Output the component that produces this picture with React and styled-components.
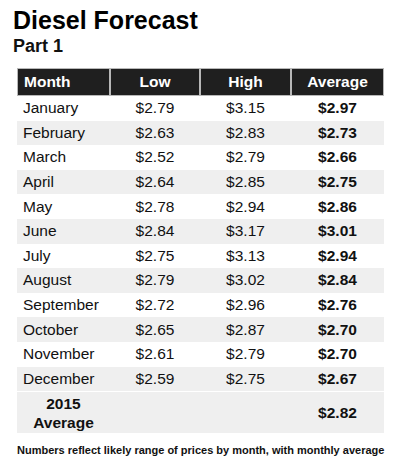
import React from "react";
import styled, { createGlobalStyle } from "styled-components";

const GlobalStyle = createGlobalStyle`
  body {
    margin: 0;
    background: #fff;
    font-family: "Liberation Sans", Arial, sans-serif;
    color: #111;
  }
`;

const rows = [
  ["January", "$2.79", "$3.15", "$2.97"],
  ["February", "$2.63", "$2.83", "$2.73"],
  ["March", "$2.52", "$2.79", "$2.66"],
  ["April", "$2.64", "$2.85", "$2.75"],
  ["May", "$2.78", "$2.94", "$2.86"],
  ["June", "$2.84", "$3.17", "$3.01"],
  ["July", "$2.75", "$3.13", "$2.94"],
  ["August", "$2.79", "$3.02", "$2.84"],
  ["September", "$2.72", "$2.96", "$2.76"],
  ["October", "$2.65", "$2.87", "$2.70"],
  ["November", "$2.61", "$2.79", "$2.70"],
  ["December", "$2.59", "$2.75", "$2.67"],
];

function App() {
  return (
    <Page>
      <GlobalStyle />
      <Title>Diesel Forecast</Title>
      <Subtitle>Part 1</Subtitle>
      <Table>
        <colgroup>
          <col style={{ width: 93 }} />
          <col style={{ width: 90 }} />
          <col style={{ width: 91 }} />
          <col style={{ width: 93 }} />
        </colgroup>
        <thead>
          <tr>
            <Head $left>Month</Head>
            <Head>Low</Head>
            <Head>High</Head>
            <Head>Average</Head>
          </tr>
        </thead>
        <tbody>
          {rows.map((r, i) => (
            <Row key={r[0]} $shade={i % 2 === 1}>
              <Cell $left>{r[0]}</Cell>
              <Cell>{r[1]}</Cell>
              <Cell>{r[2]}</Cell>
              <Cell $bold>{r[3]}</Cell>
            </Row>
          ))}
          <TotalRow>
            <TotalLabel>2015<br />Average</TotalLabel>
            <Cell />
            <Cell />
            <Cell $bold>$2.82</Cell>
          </TotalRow>
        </tbody>
      </Table>
      <Note>Numbers reflect likely range of prices by month, with monthly average</Note>
    </Page>
  );
}

const Page = styled.div`
  width: 400px;
  height: 470px;
  padding: 7px 0 0 0;
  box-sizing: border-box;
`;

const Title = styled.h1`
  margin: 0 0 0 13px;
  font-size: 25px;
  line-height: 27px;
  font-weight: bold;
  color: #000;
`;

const Subtitle = styled.h2`
  margin: 2px 0 0 13px;
  font-size: 18px;
  line-height: 20px;
  font-weight: bold;
  color: #111;
`;

const Table = styled.table`
  margin: 12px 0 0 17px;
  width: 367px;
  border-collapse: separate;
  border-spacing: 0;
  table-layout: fixed;
  font-size: 15.5px;
`;

const Head = styled.th`
  background: #1f1f1f;
  color: #fff;
  font-weight: bold;
  height: 26px;
  padding: 0 6px;
  border: 1px solid #b8b8b8;
  text-align: ${(p) => (p.$left ? "left" : "center")};
`;

const Row = styled.tr`
  background: ${(p) => (p.$shade ? "#efefef" : "#fff")};
`;

const Cell = styled.td`
  height: 24.6px;
  padding: 0 6px;
  text-align: ${(p) => (p.$left ? "left" : "center")};
  font-weight: ${(p) => (p.$bold ? "bold" : "normal")};
  white-space: nowrap;
`;

const TotalRow = styled.tr`
  background: #efefef;
  td {
    border-top: 1px solid #fff;
    height: 41px;
  }
`;

const TotalLabel = styled.td`
  text-align: center;
  font-weight: bold;
  line-height: 19px;
  padding: 0;
`;

const Note = styled.div`
  margin: 11px 0 0 17px;
  font-size: 11px;
  font-weight: bold;
  color: #111;
`;

export default App;
